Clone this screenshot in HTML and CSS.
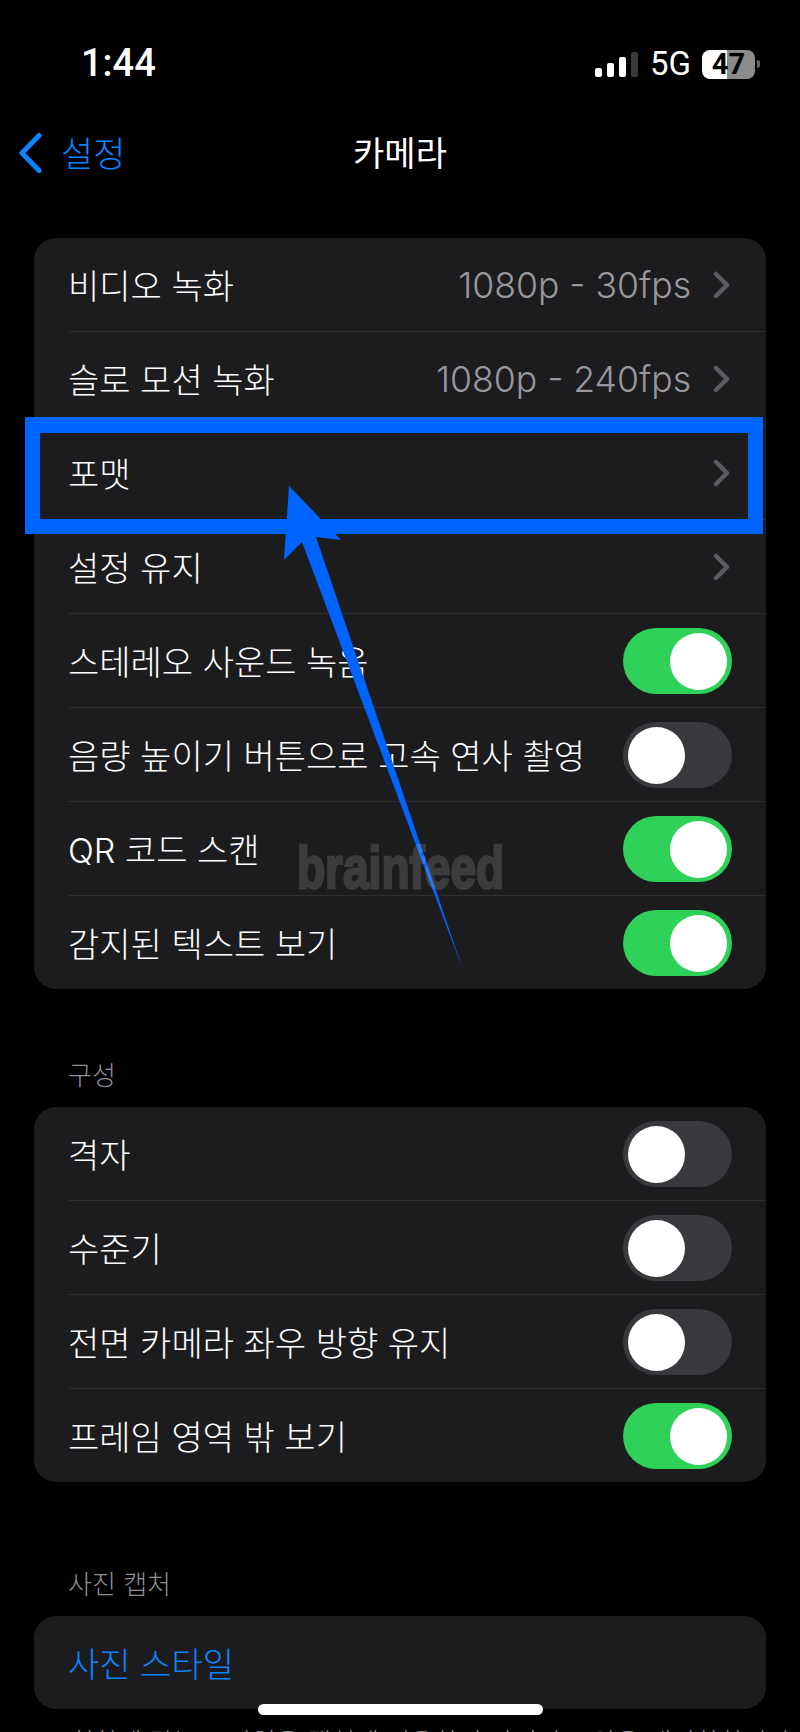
FILE: index.html
```html
<!DOCTYPE html>
<html lang="ko">
<head>
  <meta charset="UTF-8" />
  <meta name="viewport" content="width=device-width, initial-scale=1.0" />
  <title>카메라</title>
  <link rel="stylesheet" href="styles.css">
</head>
<body>
  <div class="screen">
    <div class="status-bar">
      <span class="clock">1:44</span>
      <div class="status-right">
        <div class="signal">
          <i class="bar bar1"></i>
          <i class="bar bar2"></i>
          <i class="bar bar3"></i>
          <i class="bar bar4"></i>
        </div>
        <span class="network">5G</span>
        <div class="battery">
          <div class="battery-body"><span>47</span></div>
          <i class="battery-nub"></i>
        </div>
      </div>
    </div>

    <div class="nav-bar">
      <div class="back">
        <svg class="back-icon" width="25" height="42" viewBox="0 0 25 42">
          <path d="M21 4.5 L4 22 L21 39.5" />
        </svg>
        <span>설정</span>
      </div>
      <h1>카메라</h1>
    </div>

    <div class="card">
      <div class="row">
        <div class="row-body">
          <span class="label">비디오 녹화</span>
          <span class="value">1080p - 30fps</span>
          <svg class="chevron" width="18" height="28" viewBox="0 0 18 28"><path d="M4 3 L15 14 L4 25" /></svg>
        </div>
      </div>
      <div class="row">
        <div class="row-body">
          <span class="label">슬로 모션 녹화</span>
          <span class="value">1080p - 240fps</span>
          <svg class="chevron" width="18" height="28" viewBox="0 0 18 28"><path d="M4 3 L15 14 L4 25" /></svg>
        </div>
      </div>
      <div class="row">
        <div class="row-body">
          <span class="label">포맷</span>
          <svg class="chevron" width="18" height="28" viewBox="0 0 18 28"><path d="M4 3 L15 14 L4 25" /></svg>
        </div>
      </div>
      <div class="row">
        <div class="row-body">
          <span class="label">설정 유지</span>
          <svg class="chevron" width="18" height="28" viewBox="0 0 18 28"><path d="M4 3 L15 14 L4 25" /></svg>
        </div>
      </div>
      <div class="row">
        <div class="row-body">
          <span class="label">스테레오 사운드 녹음</span>
          <div class="toggle on"><i></i></div>
        </div>
      </div>
      <div class="row">
        <div class="row-body">
          <span class="label">음량 높이기 버튼으로 고속 연사 촬영</span>
          <div class="toggle"><i></i></div>
        </div>
      </div>
      <div class="row">
        <div class="row-body">
          <span class="label">QR 코드 스캔</span>
          <div class="toggle on"><i></i></div>
        </div>
      </div>
      <div class="row">
        <div class="row-body">
          <span class="label">감지된 텍스트 보기</span>
          <div class="toggle on"><i></i></div>
        </div>
      </div>
    </div>

    <h2 class="section-title">구성</h2>
    <div class="card">
      <div class="row">
        <div class="row-body">
          <span class="label">격자</span>
          <div class="toggle"><i></i></div>
        </div>
      </div>
      <div class="row">
        <div class="row-body">
          <span class="label">수준기</span>
          <div class="toggle"><i></i></div>
        </div>
      </div>
      <div class="row">
        <div class="row-body">
          <span class="label">전면 카메라 좌우 방향 유지</span>
          <div class="toggle"><i></i></div>
        </div>
      </div>
      <div class="row">
        <div class="row-body">
          <span class="label">프레임 영역 밖 보기</span>
          <div class="toggle on"><i></i></div>
        </div>
      </div>
    </div>

    <h2 class="section-title section-title-wide">사진 캡처</h2>
    <div class="card">
      <div class="row">
        <div class="row-body">
          <span class="label link">사진 스타일</span>
        </div>
      </div>
    </div>
    <p class="footnote">취향에 맞는 스타일을 캡처에 적용하여 사진의 모양을 개인화합니다</p>

    <!-- annotations drawn on top of the screenshot -->
    <div class="highlight"></div>
    <svg class="arrow" width="800" height="1732" viewBox="0 0 800 1732">
      <path d="M289 486 L341 540 L316 537 L463 970 L302 542 L284 560 Z" />
    </svg>
    <div class="watermark">brainfeed</div>
    <div class="home-indicator"></div>
  </div>
</body>
</html>
```

FILE: styles.css
```css
* {
  box-sizing: border-box;
}
html, body {
  margin: 0;
  padding: 0;
  background-color: #000;
}
body {
  font-family: Inter, 'Noto Sans CJK KR', sans-serif;
  color: #fff;
}
.screen {
  position: relative;
  width: 800px;
  height: 1732px;
  overflow: hidden;
  background-color: #000;
}

/* status bar */
.status-bar {
  height: 108px;
  padding: 43px 40px 0 83px;
  display: flex;
  justify-content: space-between;
  align-items: flex-start;
}
.clock {
  font-family: Roboto, sans-serif;
  font-size: 38px;
  font-weight: 500;
  line-height: 40px;
  margin-left: -2px;
}
.status-right {
  display: flex;
  align-items: center;
  height: 42px;
}
.signal {
  display: flex;
  align-items: flex-end;
  gap: 5px;
  height: 25px;
  margin-right: 12px;
}
.bar {
  display: block;
  width: 7px;
  border-radius: 2px;
  background-color: #fff;
}
.bar1 { height: 9px; }
.bar2 { height: 14px; }
.bar3 { height: 20px; }
.bar4 { height: 25px; background-color: #3a3a3c; }
.network {
  font-family: Roboto, sans-serif;
  font-size: 33px;
  line-height: 36px;
  margin-right: 11px;
}
.battery {
  display: flex;
  align-items: center;
  gap: 2px;
}
.battery-body {
  width: 53px;
  height: 29px;
  border-radius: 8px;
  background: linear-gradient(90deg, #fff 0, #fff 47%, #8a8a8a 47%, #8a8a8a 100%);
  color: #000;
  font-family: Roboto, sans-serif;
  font-size: 29px;
  font-weight: 700;
  line-height: 29px;
  text-align: center;
}
.battery-nub {
  display: block;
  width: 3px;
  height: 8px;
  border-radius: 0 3px 3px 0;
  background-color: #6a6a6a;
}

/* nav */
.nav-bar {
  position: relative;
  height: 86px;
  display: flex;
  align-items: center;
  justify-content: center;
}
.nav-bar h1 {
  margin: 0;
  font-size: 34px;
  font-weight: 400;
}
.back {
  position: absolute;
  left: 18px;
  top: 18px;
  display: flex;
  align-items: center;
  gap: 18px;
  color: #0a84ff;
  font-size: 35px;
  font-weight: 300;
}
.back-icon path {
  fill: none;
  stroke: #0a84ff;
  stroke-width: 5;
  stroke-linecap: round;
  stroke-linejoin: round;
}

/* list cards */
.card {
  margin: 44px 34px 0 34px;
  background-color: #1c1c1e;
  border-radius: 22px;
  overflow: hidden;
}
.section-title + .card {
  margin-top: 0;
}
.row {
  height: 94px;
  padding-left: 34px;
}
.row:first-child {
  height: 93px;
}
.row-body {
  height: 100%;
  display: flex;
  align-items: center;
  padding-right: 34px;
  border-top: 1px solid #2e2e30;
}
.row:first-child .row-body {
  border-top: none;
}
.label {
  font-size: 34px;
  font-weight: 300;
  flex: 1;
  white-space: nowrap;
}
.label.link {
  color: #0a84ff;
}
.value {
  font-size: 35.6px;
  font-weight: 300;
  color: #98989d;
  margin-right: 21px;
  padding-top: 2px;
}
.chevron {
  margin-right: 2px;
}
.chevron path {
  fill: none;
  stroke: #5c5c60;
  stroke-width: 4.5;
  stroke-linecap: round;
  stroke-linejoin: round;
}
.toggle {
  width: 109px;
  height: 66px;
  padding: 5px;
  border-radius: 33px;
  background-color: #39393d;
  display: flex;
}
.toggle i {
  display: block;
  width: 57px;
  height: 57px;
  border-radius: 50%;
  background-color: #fff;
}
.toggle.on {
  background-color: #30d158;
  justify-content: flex-end;
}

.section-title {
  margin: 0;
  padding: 69px 68px 13px 68px;
  font-size: 26px;
  line-height: 36px;
  font-weight: 300;
  color: #8e8e93;
}
.section-title-wide {
  padding-top: 85px;
}
.footnote {
  margin: 0;
  padding: 16px 68px 0 70px;
  font-size: 26px;
  font-weight: 300;
  line-height: 36px;
  color: #8e8e93;
  white-space: nowrap;
}

/* overlays */
.highlight {
  position: absolute;
  left: 25px;
  top: 417px;
  width: 738px;
  height: 117px;
  border: 15px solid #0064ff;
  border-top-width: 16px;
}
.arrow {
  position: absolute;
  left: 0;
  top: 0;
}
.arrow path {
  fill: #0064ff;
}
.watermark {
  position: absolute;
  left: 297px;
  top: 835px;
  font-family: 'Liberation Sans', sans-serif;
  font-size: 59px;
  line-height: 66px;
  font-weight: 700;
  color: #fff;
  -webkit-text-stroke: 2.5px #fff;
  opacity: 0.14;
  transform: scaleX(0.78);
  transform-origin: left top;
}
.home-indicator {
  position: absolute;
  left: 258px;
  top: 1704px;
  width: 285px;
  height: 11px;
  border-radius: 6px;
  background-color: #fff;
}
```
